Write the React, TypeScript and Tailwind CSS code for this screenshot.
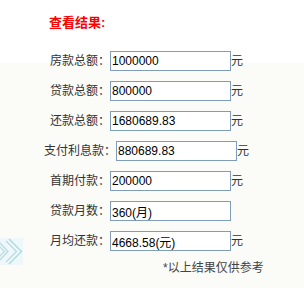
import React from "react";

const rows = [
  { label: "房款总额：", value: "1000000", unit: true },
  { label: "贷款总额：", value: "800000", unit: true },
  { label: "还款总额：", value: "1680689.83", unit: true },
  { label: "支付利息款：", value: "880689.83", unit: true },
  { label: "首期付款：", value: "200000", unit: true },
  { label: "贷款月数：", value: "360(月)", unit: false },
  { label: "月均还款：", value: "4668.58(元)", unit: true },
];

const Chevrons: React.FC = () => (
  <div className="absolute left-0 top-[238px] w-[23px] h-[27px] bg-[#eef7fa]">
    <svg width="23" height="27" viewBox="0 0 23 27" fill="none">
      <path d="M-4 1 L8 13.5 L-4 26" stroke="#b3dbe1" strokeWidth="1.2" />
      <path d="M-6 3 L4.5 13.5 L-6 24" stroke="#b3dbe1" strokeWidth="1.2" />
      <path d="M9 1 L21.5 13.5 L9 26" stroke="#a9d5dc" strokeWidth="1.2" />
      <path d="M6 3 L16.5 13.5 L6 24" stroke="#b3dbe1" strokeWidth="1.2" />
    </svg>
  </div>
);

export default function App() {
  return (
    <div
      className="relative w-[304px] h-[288px] overflow-hidden bg-[linear-gradient(to_bottom,#ffffff_63px,#fbfbf8_63px)] text-[#333] text-[12px]"
      style={{ fontFamily: '"Liberation Sans", "Noto Sans CJK SC", sans-serif' }}
    >
      <div className="h-[46px] pl-[49px] pt-[13px]">
        <span className="text-[13px] font-bold text-[#ff0000]">查看结果:</span>
      </div>

      <div className="w-[293px]">
        {rows.map((r) => (
          <div key={r.label} className="flex h-[30px] items-center justify-center">
            <span className="leading-[20px]">{r.label}</span>
            <input
              readOnly
              value={r.value}
              className="h-[20px] w-[121px] border border-[#7f9db9] bg-white px-[1px] text-[12px] text-black outline-none"
              style={{ fontFamily: '"Liberation Sans", "Noto Sans CJK SC", sans-serif' }}
            />
            <span className={r.unit ? "leading-[20px]" : "invisible leading-[20px]"}>元</span>
          </div>
        ))}
      </div>

      <div className="mt-[4px] pl-[163px] leading-[16px] text-[#444]">*以上结果仅供参考</div>

      <Chevrons />
    </div>
  );
}
